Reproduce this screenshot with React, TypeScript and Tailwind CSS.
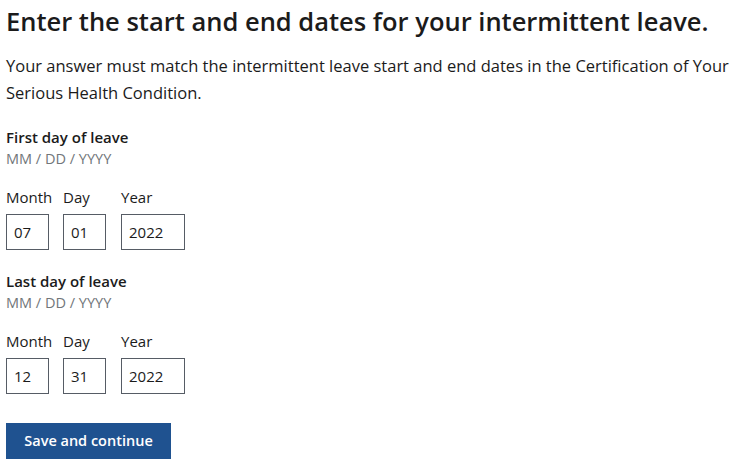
import React from 'react';

const font = { fontFamily: '"Open Sans", "Noto Sans", sans-serif' };

function DateField({ label, month, day, year }: { label: string; month: string; day: string; year: string }) {
  const parts = [
    { name: 'Month', value: month, col: 'w-[57px]', box: 'w-[43px]' },
    { name: 'Day', value: day, col: 'w-[58px]', box: 'w-[43px]' },
    { name: 'Year', value: year, col: 'w-[64px]', box: 'w-[64px]' },
  ];
  return (
    <fieldset>
      <legend className="text-[15px] font-semibold leading-[20px] text-[#1b1b1b]">{label}</legend>
      <div className="mt-[1px] text-[14.5px] leading-[22px] text-[#71767a]">MM / DD / YYYY</div>
      <div className="mt-[17px] flex">
        {parts.map((p) => (
          <div key={p.name} className={`flex flex-col ${p.col}`}>
            <label className="text-[15px] leading-[21px] text-[#1b1b1b]">{p.name}</label>
            <input
              readOnly
              value={p.value}
              className={`mt-[6px] h-[36px] ${p.box} border border-[#565c65] px-[7px] text-[15px] text-[#1b1b1b] outline-none`}
            />
          </div>
        ))}
      </div>
    </fieldset>
  );
}

export default function App() {
  return (
    <div className="bg-white px-[6px] pt-[3px]" style={font}>
      <h1 className="text-[25.5px] font-semibold leading-[36px] text-[#1b1b1b]">
        Enter the start and end dates for your intermittent leave.
      </h1>
      <p className="mt-[13px] text-[16.5px] leading-[27px] text-[#1b1b1b]">
        Your answer must match the intermittent leave start and end dates in the Certification of Your Serious Health
        Condition.
      </p>
      <div className="mt-[21px]">
        <DateField label="First day of leave" month="07" day="01" year="2022" />
      </div>
      <div className="mt-[21px]">
        <DateField label="Last day of leave" month="12" day="31" year="2022" />
      </div>
      <button className="mt-[29px] h-[36px] w-[165px] bg-[#1f5290] text-[14.5px] font-semibold text-white">
        Save and continue
      </button>
    </div>
  );
}
